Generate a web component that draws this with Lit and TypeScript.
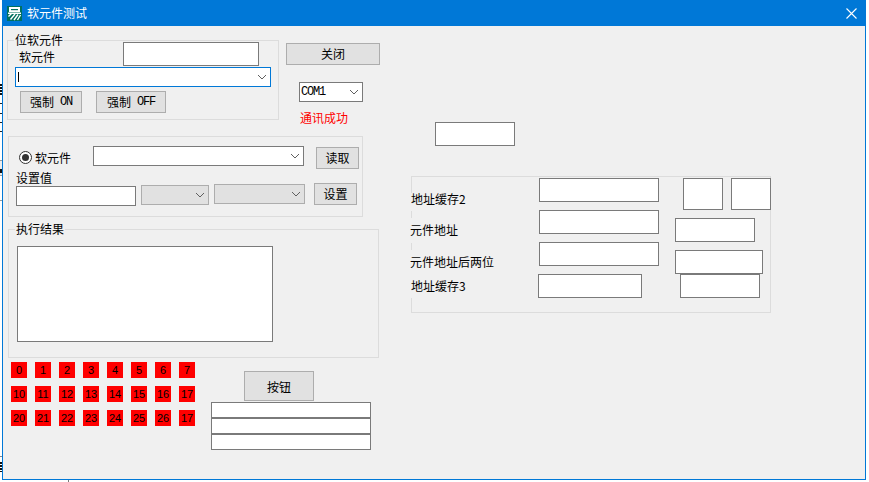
import { LitElement, html, css } from "lit";
import { customElement } from "lit/decorators.js";

const LEDS = [
  ["0", "1", "2", "3", "4", "5", "6", "7"],
  ["10", "11", "12", "13", "14", "15", "16", "17"],
  ["20", "21", "22", "23", "24", "25", "26", "17"],
].flat();

const chevron = html`<svg class="chev" width="10" height="6" viewBox="0 0 10 6"><path d="M1 1 L5 5 L9 1" fill="none" stroke="#606060" stroke-width="1"/></svg>`;

@customElement("app-root")
export class AppRoot extends LitElement {
  static styles = css`
    :host { display: block; position: relative; width: 869px; height: 482px; background: #fff; overflow: hidden;
      font-family: "Noto Sans CJK SC", "Liberation Sans", sans-serif; font-size: 12px; color: #000; }
    * { box-sizing: border-box; }
    .window { position: relative; width: 864px; height: 480px; margin-left: 2px; border: 1px solid #0078d7; border-top: 0; display: flex; flex-direction: column; background: #f0f0f0; }
    .titlebar { height: 26px; margin: 0 -1px; background: #0078d7; color: #fff; display: flex; align-items: center; flex-shrink: 0; }
    .logo { margin-left: 5px; width: 15px; height: 15px; display: block; }
    .title { margin-left: 5px; line-height: 14px; }
    .x { margin-left: auto; margin-right: 9px; display: block; }
    .body { display: flex; flex: 1; min-height: 0; }
    .left { width: 377px; flex-shrink: 0; display: flex; flex-direction: column; }
    .right { margin-left: 31px; display: flex; flex-direction: column; flex-shrink: 0; }

    .txt { background: #fff; border: 1px solid #7a7a7a; flex-shrink: 0; display: block; }
    .btn { background: #e1e1e1; border: 1px solid #adadad; display: flex; align-items: center; justify-content: center; flex-shrink: 0; line-height: 14px; }
    .combo { background: #fff; border: 1px solid #7a7a7a; display: flex; align-items: center; flex-shrink: 0; padding-right: 3px; }
    .combo .chev { margin-left: auto; }
    .combo.focus { border-color: #0078d7; }
    .combo.off { background: #e1e1e1; border-color: #adadad; }
    .latin { font-family: "Liberation Mono", monospace; font-size: 12px; letter-spacing: -1.2px; }
    .lb { line-height: 14px; white-space: nowrap; flex-shrink: 0; }
    .group { border: 1px solid #dcdcdc; position: relative; flex-shrink: 0; }
    .legend { position: absolute; top: -8px; left: 6px; background: #f0f0f0; line-height: 14px; padding: 0 1px; }

    .row1 { display: flex; margin-top: 14px; align-items: flex-start; }
    .g1 { margin-left: 4px; width: 272px; height: 80px; }
    .g1-top { display: flex; margin-top: 1px; height: 24px; }
    .g1-lb { margin: 8px 0 0 11px; width: 104px; }
    .g1-in { width: 136px; height: 24px; }
    .g1-combo { margin: 1px 0 0 7px; width: 256px; height: 20px; padding-left: 2px; }
    .caret { width: 1px; height: 10px; background: #000; }
    .g1-btns { display: flex; margin: 4px 0 0 12px; gap: 14px; }
    .on { width: 62px; height: 22px; gap: 6px; }
    .offb { width: 70px; height: 22px; gap: 6px; }
    .side { margin-left: 7px; display: flex; flex-direction: column; align-items: flex-start; }
    .close { margin-top: 3px; width: 94px; height: 22px; }
    .com { margin: 17px 0 0 13px; width: 64px; height: 20px; padding-left: 1px; }
    .ok { margin: 9px 0 0 14px; height: 14px; color: #f00; }

    .g2 { margin: 11px 0 0 5px; width: 355px; height: 81px; }
    .g2-a { display: flex; margin-top: 9px; height: 23px; align-items: flex-start; }
    .radio { margin: 5px 0 0 10px; width: 13px; height: 13px; border-radius: 50%; border: 1px solid #333; background: #fff; display: flex; align-items: center; justify-content: center; flex-shrink: 0; }
    .radio i { width: 7px; height: 7px; border-radius: 50%; background: #333; display: block; }
    .g2-lb { margin: 5px 0 0 3px; width: 36px; }
    .g2-combo { margin-left: 22px; width: 211px; height: 20px; }
    .read { margin: 1px 0 0 12px; width: 43px; height: 22px; }
    .setlb { margin: 1px 0 0 7px; height: 13px; line-height: 16px; }
    .g2-c { display: flex; align-items: flex-start; }
    .g2-in { margin: 3px 0 0 7px; width: 120px; height: 20px; }
    .c1 { margin: 2px 0 0 5px; width: 68px; height: 20px; }
    .c2 { margin: 1px 0 0 5px; width: 91px; height: 20px; }
    .set { margin-left: 9px; width: 43px; height: 22px; }

    .g3 { margin: 12px 0 0 5px; width: 371px; height: 129px; }
    .memo { margin: 16px 0 0 8px; width: 256px; height: 96px; }

    .bottom { display: flex; align-items: flex-start; }
    .leds { margin: 4px 0 0 8px; display: grid; grid-template-columns: repeat(8, 16px); grid-auto-rows: 16px; gap: 8px; flex-shrink: 0; }
    .led { background: #f00; color: #000; font-family: "Liberation Sans", sans-serif; font-size: 11px; display: flex; align-items: center; justify-content: center; line-height: 16px; }
    .stack { margin: 13px 0 0 16px; display: flex; flex-direction: column; align-items: flex-start; }
    .press { margin-left: 33px; width: 70px; height: 30px; margin-bottom: 1px; padding-top: 2px; }
    .line { width: 160px; height: 16px; }

    .solo { margin: 96px 0 0 24px; width: 80px; height: 24px; }
    .g4 { margin-top: 30px; width: 360px; height: 137px; display: flex; align-items: flex-start; }
    .labels { margin-left: -2px; width: 129px; display: flex; flex-direction: column; align-items: flex-start; flex-shrink: 0; }
    .labels .lb { background: #f0f0f0; }
    .l1 { margin-top: 16px; height: 18px; padding-left: 1px; line-height: 12px; }
    .l2 { margin-top: 7px; height: 25px; padding-top: 5px; }
    .l3 { margin-top: 7px; height: 22px; padding-top: 5px; }
    .l4 { height: 26px; padding: 7px 0 0 1px; }
    .mid { margin-top: 1px; width: 120px; display: flex; flex-direction: column; gap: 8px; flex-shrink: 0; }
    .m { width: 120px; height: 24px; }
    .m4 { margin-left: -1px; width: 104px; height: 24px; }
    .far { margin: 1px 0 0 16px; display: flex; flex-direction: column; align-items: flex-start; flex-shrink: 0; }
    .pair { display: flex; gap: 8px; margin: 0 0 8px 8px; }
    .sq { width: 40px; height: 32px; }
    .f3 { width: 80px; height: 24px; margin-bottom: 8px; }
    .f4 { width: 88px; height: 24px; }
    .f5 { margin-left: 5px; width: 80px; height: 24px; }

    .behind { position: absolute; display: block; left: 0; width: 2px; }
    .b1 { top: 84px; height: 11px; background: repeating-linear-gradient(#111 0 2px, #fff 2px 3px); }
    .b2 { top: 103px; height: 1px; background: #222; }
    .b3 { top: 113px; height: 1px; background: #222; }
    .b4 { top: 122px; height: 1px; background: #222; }
    .b5 { top: 131px; height: 1px; background: #222; }
    .b6 { top: 160px; height: 16px; background: #ececec; border-top: 1px solid #999; border-bottom: 1px solid #999; }
    .b7 { top: 169px; height: 4px; background: #111; }
    .b8 { top: 200px; height: 1px; background: #999; }
    .b9 { top: 456px; height: 1px; background: #888; }
    .b10 { top: 462px; height: 10px; background: repeating-linear-gradient(#111 0 2px, #fff 2px 3px); }
    .b11 { left: 68px; top: 480px; width: 1px; height: 2px; background: #777; }
  `;

  render() {
    return html`
      ${["b1", "b2", "b3", "b4", "b5", "b6", "b7", "b8", "b9", "b10", "b11"].map((b) => html`<span class="behind ${b}"></span>`)}
      <div class="window">
        <div class="titlebar">
          <svg class="logo" viewBox="0 0 15 15">
            <rect width="15" height="15" fill="#00705f"/>
            <rect x="2" y="1" width="11" height="5" fill="#fff"/>
            <rect x="4" y="3" width="7" height="1.2" fill="#00705f"/>
            <path d="M1 7.2H14 M1.5 10.5L4.5 7.5 M3.5 13.5L8 8 M7 14L11 8.5 M10.5 14L13.5 9" fill="none" stroke="#fff" stroke-width="1.4"/>
          </svg>
          <span class="title">软元件测试</span>
          <svg class="x" width="11" height="11" viewBox="0 0 11 11"><path d="M0.5 0.5L10.5 10.5M10.5 0.5L0.5 10.5" stroke="#fff" stroke-width="1.1" fill="none"/></svg>
        </div>
        <div class="body">
          <div class="left">
            <div class="row1">
              <div class="group g1">
                <span class="legend">位软元件</span>
                <div class="g1-top"><span class="lb g1-lb">软元件</span><span class="txt g1-in"></span></div>
                <div class="combo focus g1-combo"><span class="caret"></span>${chevron}</div>
                <div class="g1-btns">
                  <div class="btn on"><span>强制</span><span class="latin">ON</span></div>
                  <div class="btn offb"><span>强制</span><span class="latin">OFF</span></div>
                </div>
              </div>
              <div class="side">
                <div class="btn close">关闭</div>
                <div class="combo com"><span class="latin">COM1</span>${chevron}</div>
                <span class="lb ok">通讯成功</span>
              </div>
            </div>
            <div class="group g2">
              <div class="g2-a">
                <span class="radio"><i></i></span>
                <span class="lb g2-lb">软元件</span>
                <div class="combo g2-combo">${chevron}</div>
                <div class="btn read">读取</div>
              </div>
              <div class="lb setlb">设置值</div>
              <div class="g2-c">
                <span class="txt g2-in"></span>
                <div class="combo off c1">${chevron}</div>
                <div class="combo off c2">${chevron}</div>
                <div class="btn set">设置</div>
              </div>
            </div>
            <div class="group g3">
              <span class="legend">执行结果</span>
              <span class="txt memo"></span>
            </div>
            <div class="bottom">
              <div class="leds">${LEDS.map((n) => html`<div class="led">${n}</div>`)}</div>
              <div class="stack">
                <div class="btn press">按钮</div>
                <span class="txt line"></span>
                <span class="txt line"></span>
                <span class="txt line"></span>
              </div>
            </div>
          </div>
          <div class="right">
            <span class="txt solo"></span>
            <div class="group g4">
              <div class="labels">
                <span class="lb l1">地址缓存2</span>
                <span class="lb l2">元件地址</span>
                <span class="lb l3">元件地址后两位</span>
                <span class="lb l4">地址缓存3</span>
              </div>
              <div class="mid">
                <span class="txt m"></span>
                <span class="txt m"></span>
                <span class="txt m"></span>
                <span class="txt m4"></span>
              </div>
              <div class="far">
                <div class="pair"><span class="txt sq"></span><span class="txt sq"></span></div>
                <span class="txt f3"></span>
                <span class="txt f4"></span>
                <span class="txt f5"></span>
              </div>
            </div>
          </div>
        </div>
      </div>
    `;
  }
}
